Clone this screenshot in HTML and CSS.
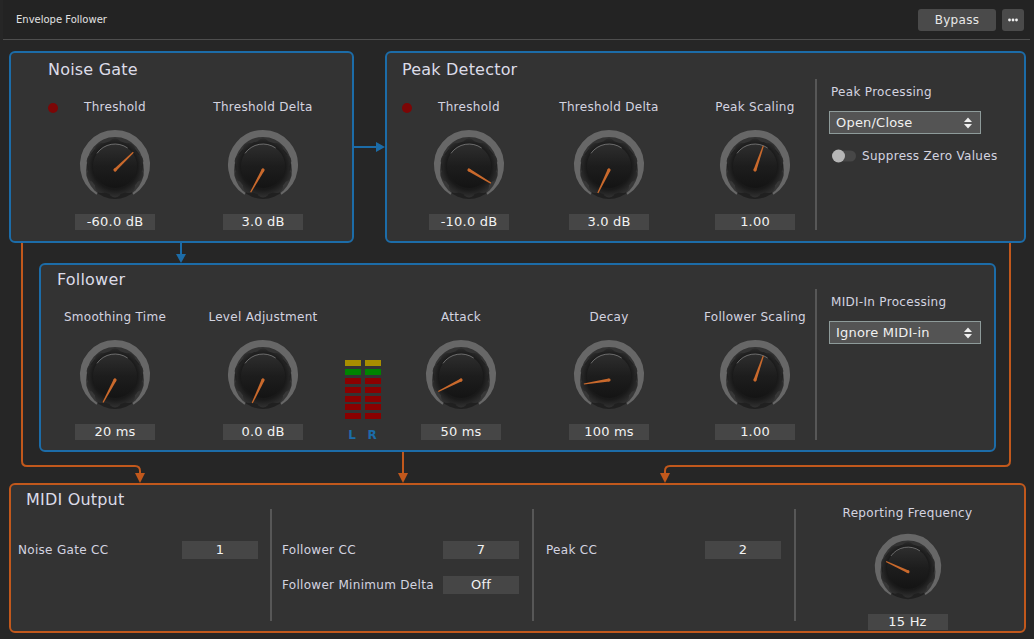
FILE: index.html
```html
<!DOCTYPE html>
<html lang="en">
<head>
<meta charset="utf-8">
<title>Envelope Follower</title>
<link rel="stylesheet" href="styles.css">
</head>
<body>
<svg class="sprite" aria-hidden="true">
  <defs>
    <radialGradient id="kbody" gradientUnits="userSpaceOnUse" cx="38" cy="40" r="31">
      <stop offset="0" stop-color="#1e1e1e"/>
      <stop offset="0.72" stop-color="#191919"/>
      <stop offset="0.9" stop-color="#2a2a2a"/>
      <stop offset="1" stop-color="#323232"/>
    </radialGradient>
    <linearGradient id="kface" x1="0" y1="0" x2="0" y2="1">
      <stop offset="0" stop-color="#2e2e2e"/>
      <stop offset="0.5" stop-color="#1d1d1d"/>
      <stop offset="1" stop-color="#141414"/>
    </linearGradient>
    <g id="knob-base">
      <path d="M21.31 64.71 A31.5 31.5 0 1 1 54.69 64.71" fill="none" stroke="#676767" stroke-width="7"/>
      <circle cx="38" cy="43" r="29" fill="#101010" opacity="0.55"/>
      <g fill="url(#kbody)">
        <circle cx="38" cy="41" r="26.5"/>
        <circle cx="38" cy="18" r="6.5"/>
        <circle cx="51.52" cy="22.39" r="6.5"/>
        <circle cx="59.88" cy="33.89" r="6.5"/>
        <circle cx="59.88" cy="48.11" r="6.5"/>
        <circle cx="51.52" cy="59.61" r="6.5"/>
        <circle cx="38" cy="64" r="6.5"/>
        <circle cx="24.48" cy="59.61" r="6.5"/>
        <circle cx="16.12" cy="48.11" r="6.5"/>
        <circle cx="16.12" cy="33.89" r="6.5"/>
        <circle cx="24.48" cy="22.39" r="6.5"/>
      </g>
      <circle cx="38" cy="39" r="22" fill="url(#kface)"/>
      <path d="M19.98 26.38 A22 22 0 0 1 50.62 20.98" fill="none" stroke="#a8a8a8" stroke-width="0.8" opacity="0.7"/>
    </g>
    <g id="needle">
      <polygon points="36.5,43 39.5,43 38.6,17.5 37.4,17.5" fill="#c9692c"/>
      <circle cx="38" cy="43" r="1.6" fill="#c9692c"/>
    </g>
    <g id="updown">
      <polygon points="1,6 5,1.5 9,6" fill="#eeeeee"/>
      <polygon points="1,8 5,12.5 9,8" fill="#eeeeee"/>
    </g>
  </defs>
</svg>

<header class="topbar">
  <div class="app-title">Envelope Follower</div>
  <div class="top-actions">
    <button class="btn bypass">Bypass</button>
    <button class="btn more" aria-label="More"><svg viewBox="0 0 22 22" width="22" height="22"><circle cx="7.5" cy="11" r="1.4" fill="#f0f0f0"/><circle cx="11" cy="11" r="1.4" fill="#f0f0f0"/><circle cx="14.5" cy="11" r="1.4" fill="#f0f0f0"/></svg></button>
  </div>
</header>

<main class="canvas">
  <div class="row-top">
    <section class="panel panel-blue gate">
      <h2 class="panel-title">Noise Gate</h2>
      <div class="panel-body">
        <span class="led"></span>
        <div class="knob-unit">
          <div class="k-label">Threshold</div>
          <svg class="knob" viewBox="0 0 76 76"><use href="#knob-base"/><g transform="rotate(46 38 43)"><use href="#needle"/></g></svg>
          <div class="k-value">-60.0 dB</div>
        </div>
        <div class="knob-unit gap-68">
          <div class="k-label">Threshold Delta</div>
          <svg class="knob" viewBox="0 0 76 76"><use href="#knob-base"/><g transform="rotate(-151 38 43)"><use href="#needle"/></g></svg>
          <div class="k-value">3.0 dB</div>
        </div>
      </div>
    </section>

    <section class="panel panel-blue peak">
      <h2 class="panel-title">Peak Detector</h2>
      <div class="panel-body">
        <span class="led"></span>
        <div class="knob-unit">
          <div class="k-label">Threshold</div>
          <svg class="knob" viewBox="0 0 76 76"><use href="#knob-base"/><g transform="rotate(121 38 43)"><use href="#needle"/></g></svg>
          <div class="k-value">-10.0 dB</div>
        </div>
        <div class="knob-unit gap-60">
          <div class="k-label">Threshold Delta</div>
          <svg class="knob" viewBox="0 0 76 76"><use href="#knob-base"/><g transform="rotate(-154 38 43)"><use href="#needle"/></g></svg>
          <div class="k-value">3.0 dB</div>
        </div>
        <div class="knob-unit gap-66">
          <div class="k-label">Peak Scaling</div>
          <svg class="knob" viewBox="0 0 76 76"><use href="#knob-base"/><g transform="rotate(19 38 43)"><use href="#needle"/></g></svg>
          <div class="k-value">1.00</div>
        </div>
        <div class="vdiv"></div>
        <div class="side">
          <div class="side-label">Peak Processing</div>
          <div class="select"><span>Open/Close</span><svg class="updown" viewBox="0 0 10 14"><use href="#updown"/></svg></div>
          <div class="toggle-row">
            <svg class="toggle" viewBox="0 0 24 14"><rect x="3" y="1.5" width="21" height="11" rx="5.5" fill="#474747"/><circle cx="6.5" cy="7" r="6.5" fill="#b6b6b6"/></svg>
            <span>Suppress Zero Values</span>
          </div>
        </div>
      </div>
    </section>
  </div>

  <section class="panel panel-blue follower">
    <h2 class="panel-title">Follower</h2>
    <div class="panel-body">
      <div class="knob-unit">
        <div class="k-label">Smoothing Time</div>
        <svg class="knob" viewBox="0 0 76 76"><use href="#knob-base"/><g transform="rotate(-152 38 43)"><use href="#needle"/></g></svg>
        <div class="k-value">20 ms</div>
      </div>
      <div class="knob-unit gap-68">
        <div class="k-label">Level Adjustment</div>
        <svg class="knob" viewBox="0 0 76 76"><use href="#knob-base"/><g transform="rotate(-155 38 43)"><use href="#needle"/></g></svg>
        <div class="k-value">0.0 dB</div>
      </div>
      <div class="meter">
        <div class="meter-bars">
          <div class="mcol">
            <span class="seg yellow"></span><span class="seg green"></span><span class="seg red"></span><span class="seg red"></span><span class="seg red"></span><span class="seg red"></span><span class="seg red"></span>
          </div>
          <div class="mcol">
            <span class="seg yellow"></span><span class="seg green"></span><span class="seg red"></span><span class="seg red"></span><span class="seg red"></span><span class="seg red"></span><span class="seg red"></span>
          </div>
        </div>
        <div class="meter-labels"><span>L</span><span>R</span></div>
      </div>
      <div class="knob-unit gap-40">
        <div class="k-label">Attack</div>
        <svg class="knob" viewBox="0 0 76 76"><use href="#knob-base"/><g transform="rotate(-117 38 43)"><use href="#needle"/></g></svg>
        <div class="k-value">50 ms</div>
      </div>
      <div class="knob-unit gap-68">
        <div class="k-label">Decay</div>
        <svg class="knob" viewBox="0 0 76 76"><use href="#knob-base"/><g transform="rotate(-99 38 43)"><use href="#needle"/></g></svg>
        <div class="k-value">100 ms</div>
      </div>
      <div class="knob-unit gap-66">
        <div class="k-label">Follower Scaling</div>
        <svg class="knob" viewBox="0 0 76 76"><use href="#knob-base"/><g transform="rotate(19 38 43)"><use href="#needle"/></g></svg>
        <div class="k-value">1.00</div>
      </div>
      <div class="vdiv"></div>
      <div class="side">
        <div class="side-label">MIDI-In Processing</div>
        <div class="select"><span>Ignore MIDI-in</span><svg class="updown" viewBox="0 0 10 14"><use href="#updown"/></svg></div>
      </div>
    </div>
  </section>

  <section class="panel panel-orange midi">
    <h2 class="panel-title">MIDI Output</h2>
    <div class="midi-body">
      <div class="midi-sec s1">
        <div class="cc-row"><span>Noise Gate CC</span><span class="cc-box">1</span></div>
      </div>
      <div class="mdiv"></div>
      <div class="midi-sec s2">
        <div class="cc-row"><span>Follower CC</span><span class="cc-box">7</span></div>
        <div class="cc-row"><span>Follower Minimum Delta</span><span class="cc-box">Off</span></div>
      </div>
      <div class="mdiv"></div>
      <div class="midi-sec s3">
        <div class="cc-row"><span>Peak CC</span><span class="cc-box">2</span></div>
      </div>
      <div class="mdiv"></div>
      <div class="midi-freq">
        <div class="k-label freq-label">Reporting Frequency</div>
        <svg class="knob knob-sm" viewBox="0 0 76 76"><use href="#knob-base"/><g transform="rotate(-65 38 43)"><use href="#needle"/></g></svg>
        <div class="k-value freq-value">15 Hz</div>
      </div>
    </div>
  </section>
</main>

<svg class="wires" viewBox="0 0 1034 639" aria-hidden="true">
  <g fill="none" stroke-width="2">
    <path d="M353 147 H377" stroke="#1c6ca8"/>
    <path d="M181 243 V255" stroke="#1c6ca8"/>
    <path d="M22 243 V461 Q22 466 27 466 H135 Q140 466 140 471 V475" stroke="#c1581c"/>
    <path d="M403 452 V475" stroke="#c1581c"/>
    <path d="M1010 243 V461 Q1010 466 1005 466 H670 Q665 466 665 471 V475" stroke="#c1581c"/>
  </g>
  <polygon points="376,142 385,147 376,152" fill="#1c6ca8"/>
  <polygon points="176,254 181,263 186,254" fill="#1c6ca8"/>
  <polygon points="135,473 140,483 145,473" fill="#c1581c"/>
  <polygon points="398,473 403,483 408,473" fill="#c1581c"/>
  <polygon points="660,473 665,483 670,473" fill="#c1581c"/>
</svg>
</body>
</html>
```

FILE: styles.css
```css
html, body {
  margin: 0;
  padding: 0;
}

body {
  position: relative;
  width: 1034px;
  height: 639px;
  overflow: hidden;
  background: #262626;
  color: #d4d4e0;
  font-family: "DejaVu Sans", "Liberation Sans", sans-serif;
  font-size: 12px;
  letter-spacing: 0.3px;
}

.sprite {
  display: block;
  width: 0;
  height: 0;
  overflow: hidden;
}

/* ---------- top bar ---------- */
.topbar {
  height: 39px;
  margin: 0 4px 0 3px;
  padding: 0 6px 0 13px;
  border-bottom: 1px solid #4e4e4e;
  background: #232323;
  display: flex;
  align-items: center;
  justify-content: space-between;
}

.app-title {
  font-size: 10px;
  letter-spacing: 0;
  color: #e2e2e2;
}

.top-actions {
  display: flex;
  gap: 6px;
}

.btn {
  height: 22px;
  border: 0;
  border-radius: 3px;
  background: #4a4a4a;
  color: #e8e8e8;
  font-family: "DejaVu Sans", sans-serif;
  font-size: 12px;
  letter-spacing: 0.3px;
  padding: 0;
  display: flex;
  align-items: center;
  justify-content: center;
}

.bypass { width: 78px; }
.more { width: 22px; }

/* ---------- canvas ---------- */
.canvas {
  padding: 11px 0 0 9px;
}

.row-top {
  display: flex;
  gap: 31px;
}

.panel {
  box-sizing: border-box;
  border: 2px solid;
  border-radius: 6px;
  background: #333333;
}

.panel-blue { border-color: #1c6ca8; }
.panel-orange { border-color: #c1581c; }

.gate { width: 345px; height: 192px; }
.peak { width: 641px; height: 192px; }
.follower { width: 957px; height: 189px; margin: 20px 0 0 30px; }
.midi { width: 1017px; height: 150px; margin-top: 31px; }

.panel-title {
  margin: 0;
  font-size: 16px;
  font-weight: normal;
  line-height: 19px;
  letter-spacing: 0.2px;
  color: #dcdce8;
}

.gate .panel-title { padding: 7px 0 0 37px; }
.peak .panel-title { padding: 7px 0 0 15px; }
.follower .panel-title { padding: 5px 0 0 16px; }
.midi .panel-title { padding: 5px 0 0 15px; }

.panel-body {
  display: flex;
  align-items: flex-start;
}

.gate .panel-body { padding-left: 37px; }
.peak .panel-body { padding-left: 15px; }
.follower .panel-body { padding-left: 34px; }

.led {
  width: 10px;
  height: 10px;
  border-radius: 50%;
  background: #7c0606;
  margin: 24px 17px 0 0;
  flex: none;
}

/* ---------- knobs ---------- */
.knob-unit {
  width: 80px;
  flex: none;
  padding-top: 20px;
  display: flex;
  flex-direction: column;
  align-items: center;
}

.gap-40 { margin-left: 40px; }
.gap-60 { margin-left: 60px; }
.gap-66 { margin-left: 66px; }
.gap-68 { margin-left: 68px; }

.k-label {
  line-height: 16px;
  white-space: nowrap;
  color: #d4d4e0;
}

.knob {
  display: block;
  width: 76px;
  height: 76px;
  margin-top: 12px;
  flex: none;
}

.k-value {
  margin-top: 11px;
  width: 80px;
  height: 16px;
  line-height: 16px;
  background: #464646;
  color: #f2f2f2;
  font-size: 13px;
  letter-spacing: 0.2px;
  text-align: center;
}

/* ---------- dividers & side controls ---------- */
.vdiv {
  width: 2px;
  height: 151px;
  background: #575757;
  margin-left: 20px;
  flex: none;
}

.side {
  padding: 5px 0 0 12px;
}

.side-label {
  margin-left: 2px;
  line-height: 16px;
  white-space: nowrap;
}

.select {
  box-sizing: border-box;
  margin-top: 11px;
  width: 152px;
  height: 23px;
  border: 1px solid #8e9b9a;
  background: #545454;
  color: #f0f0f0;
  font-size: 13px;
  letter-spacing: 0.2px;
  display: flex;
  align-items: center;
  justify-content: space-between;
  padding: 0 7px 0 6px;
}

.updown {
  width: 10px;
  height: 14px;
}

.toggle-row {
  margin: 14px 0 0 3px;
  height: 16px;
  display: flex;
  align-items: center;
  gap: 6px;
  white-space: nowrap;
}

.toggle {
  width: 24px;
  height: 14px;
}

/* ---------- meters ---------- */
.meter {
  margin: 71px 0 0 42px;
  width: 36px;
  flex: none;
}

.meter-bars {
  display: flex;
  gap: 4px;
}

.mcol {
  display: flex;
  flex-direction: column;
  gap: 2.9px;
}

.seg {
  display: block;
  width: 16px;
  height: 6px;
}

.seg.yellow { background: #a88e00; }
.seg.green { background: #008400; }
.seg.red { background: #8a0000; }

.meter-labels {
  display: flex;
  gap: 4px;
  margin-top: 10px;
  line-height: 12px;
  font-weight: bold;
  letter-spacing: 0;
  color: #1c6ca8;
}

.meter-labels span {
  width: 16px;
  text-align: center;
}

.meter-labels span:first-child { margin-left: -1px; }

/* ---------- MIDI output ---------- */
.midi-body {
  display: flex;
  align-items: flex-start;
}

.midi-sec {
  box-sizing: border-box;
  padding-top: 32px;
  flex: none;
}

.s1 { width: 259px; padding-left: 7px; padding-right: 12px; }
.s2 { width: 260px; padding-left: 10px; padding-right: 13px; }
.s3 { width: 260px; padding-left: 12px; padding-right: 13px; }

.mdiv {
  width: 2px;
  height: 112px;
  background: #575757;
  flex: none;
}

.cc-row {
  height: 18px;
  display: flex;
  align-items: center;
  justify-content: space-between;
  white-space: nowrap;
}

.cc-row + .cc-row {
  margin-top: 17px;
}

.cc-box {
  width: 76px;
  height: 18px;
  line-height: 18px;
  background: #464646;
  color: #f2f2f2;
  font-size: 13px;
  letter-spacing: 0.2px;
  text-align: center;
}

.midi-freq {
  flex: 1;
  padding-right: 5px;
  display: flex;
  flex-direction: column;
  align-items: center;
}

.freq-label { margin-top: -4px; }

.knob-sm {
  width: 72px;
  height: 72px;
  margin-top: 10px;
}

.freq-value { margin-top: 11px; }

/* ---------- connectors ---------- */
.wires {
  position: absolute;
  left: 0;
  top: 0;
  width: 1034px;
  height: 639px;
  pointer-events: none;
}
```
